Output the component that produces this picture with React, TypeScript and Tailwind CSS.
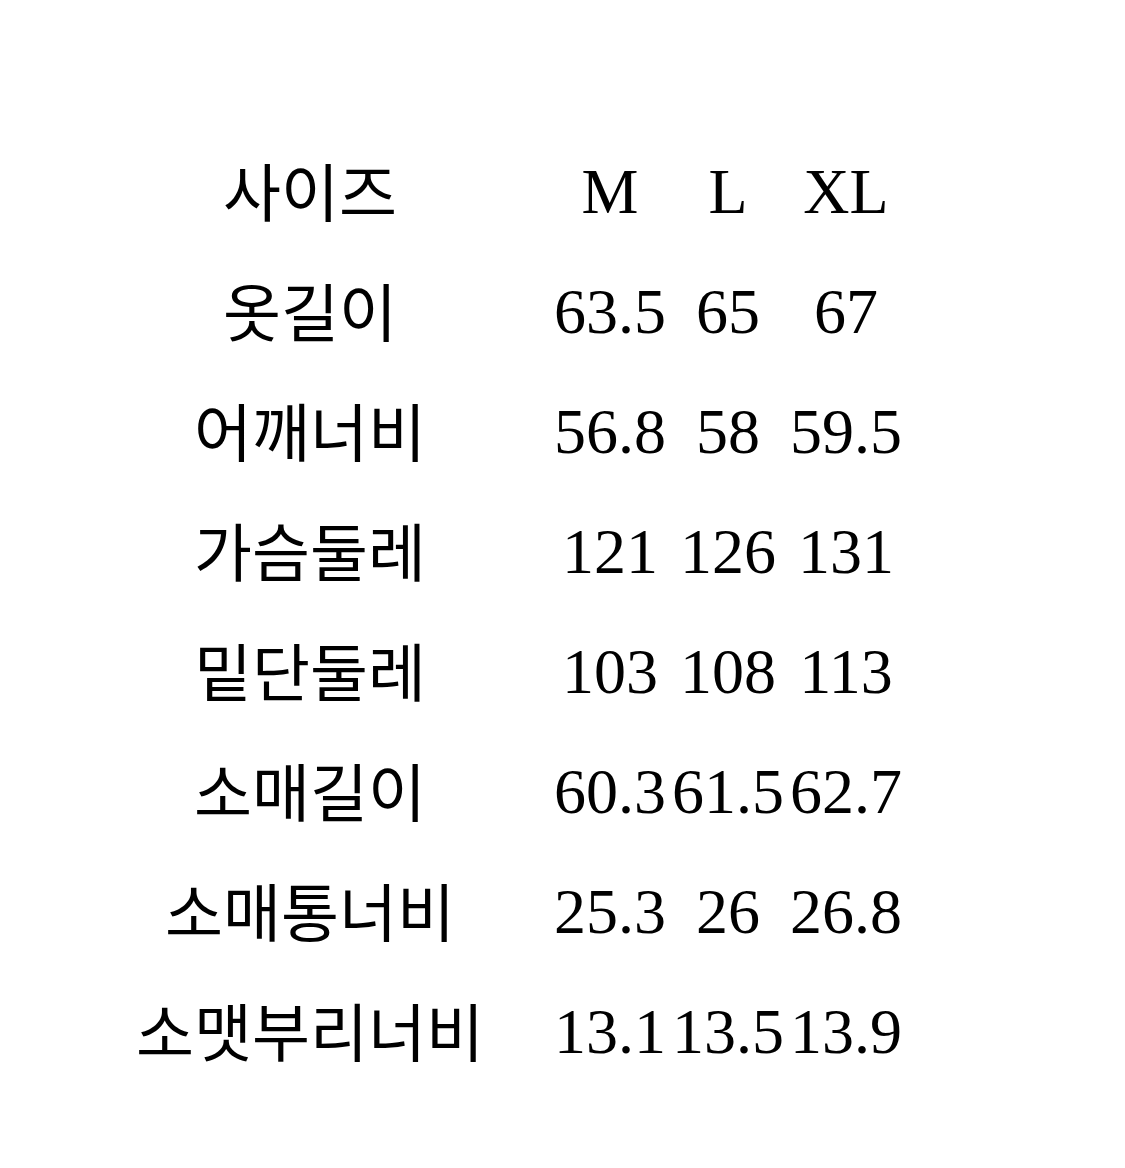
const sizes = ['M', 'L', 'XL']

const rows: [string, string[]][] = [
  ['옷길이', ['63.5', '65', '67']],
  ['어깨너비', ['56.8', '58', '59.5']],
  ['가슴둘레', ['121', '126', '131']],
  ['밑단둘레', ['103', '108', '113']],
  ['소매길이', ['60.3', '61.5', '62.7']],
  ['소매통너비', ['25.3', '26', '26.8']],
  ['소맷부리너비', ['13.1', '13.5', '13.9']],
]

const Row = ({ label, values }: { label: string; values: string[] }) => (
  <div className="flex h-[120px] items-center">
    <div className="w-[360px] pb-[8px] text-center text-[63px] text-black font-['Noto_Sans_CJK_KR',sans-serif] leading-none whitespace-nowrap">
      {label}
    </div>
    <div className="ml-[61px] grid grid-cols-[118px_118px_118px]">
      {values.map((v, i) => (
        <div
          key={i}
          className="text-center text-[64px] text-black font-['Liberation_Serif',serif] leading-none whitespace-nowrap"
        >
          {v}
        </div>
      ))}
    </div>
  </div>
)

export default function App() {
  return (
    <div className="w-[1125px] h-[1168px] bg-white pt-[132px] pl-[130px]">
      <Row label="사이즈" values={sizes} />
      {rows.map(([label, values]) => (
        <Row key={label} label={label} values={values} />
      ))}
    </div>
  )
}
